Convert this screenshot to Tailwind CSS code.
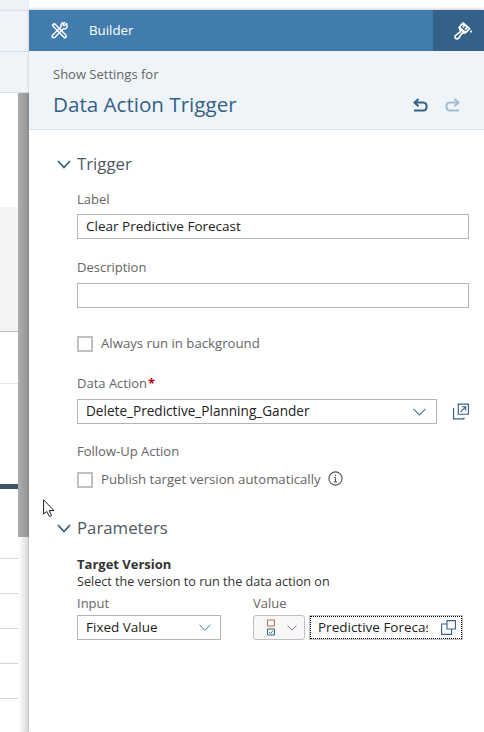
<!DOCTYPE html>
<html lang="en">
<head>
    <meta charset="UTF-8">
    <title>Builder</title>
    <script src="https://cdn.jsdelivr.net/npm/@tailwindcss/browser@4"></script>
</head>
<body class="relative w-[484px] h-[732px] overflow-hidden bg-white font-['Open_Sans','Noto_Sans',sans-serif] flex">

    <!-- page behind the panel -->
    <div class="w-[29px] h-full shrink-0 flex flex-col">
        <div class="h-[10px] bg-[#eef1f5]"></div>
        <div class="h-[42px] bg-[#f0f4f9] border-t border-[#d5e3f0] border-b"></div>
        <div class="h-[41px] bg-[#eff4f9] border-b border-[#cfe0f0]"></div>
        <div class="flex-1 flex">
            <div class="w-[18px] flex flex-col">
                <div class="h-[114px]"></div>
                <div class="h-[125px] bg-[#f4f4f4] border-b border-[#bbbbbb]"></div>
                <div class="h-[52px] border-b border-[#e5e5e5]"></div>
                <div class="h-[100px]"></div>
                <div class="h-[5px] bg-[#3e5368]"></div>
                <div class="h-[70px] border-b border-[#d5d5d5]"></div>
                <div class="h-[35px] border-b border-[#d5d5d5]"></div>
                <div class="h-[35px] border-b border-[#d5d5d5]"></div>
                <div class="h-[35px] border-b border-[#d5d5d5]"></div>
                <div class="h-[35px] border-b border-[#d5d5d5]"></div>
            </div>
            <div class="w-[11px] flex flex-col">
                <div class="h-[444px] bg-gradient-to-r from-[#adadad] to-[#949494]"></div>
                <div class="flex-1 bg-gradient-to-r from-white to-[#d9d9d9]"></div>
            </div>
        </div>
    </div>

    <!-- builder panel -->
    <div class="flex-1 mt-[10px] flex flex-col shadow-[0_-1px_3px_rgba(0,0,0,0.2)]">
        <div class="h-[41px] bg-[#427cac] flex items-center text-white shrink-0">
            <svg class="ml-[22px] w-[17px] h-[17px]" viewBox="0 0 18 18" fill="none" stroke="white" stroke-width="1.5" stroke-linejoin="round" stroke-linecap="round">
                <path d="M1.5 3.5 L3.5 1.5 L6 4 L16 14 Q16.8 15.5 15.5 16.4 Q14.2 17 13.4 15.9 L3.8 6 L1.5 3.5Z"/>
                <path d="M16.6 1.6 L14.4 3.8 L13 3.6 L12.8 2.2 L14.4 0.8 Q11.5 0.4 10.6 2.6 Q10.2 4 10.8 5 L1.6 14 Q0.8 15.4 1.8 16.4 Q3 17.2 4.2 16.2 L13 7.2 Q15 7.8 16.4 6.4 Q17.6 4.8 16.6 1.6Z"/>
            </svg>
            <span class="ml-[21px] text-[13.3px] font-medium">Builder</span>
            <div class="ml-auto w-[51px] h-full bg-[#346187] flex items-center justify-center">
                <svg class="ml-[8px] w-[18px] h-[18px]" viewBox="0 0 18 18" fill="none" stroke="white" stroke-width="1.7" stroke-linejoin="round">
                    <path d="M9 1 L15.6 6.6 L11.6 10.6 L5.2 5.2Z"/>
                    <path d="M5.4 6 L10.8 10.8 L8 11.2 L4.4 16.4 Q2.8 17.4 1.2 15.8 Q0.6 14.4 2 13.2 L6.6 9.6Z"/>
                    <path d="M11 2.8 L8.8 5.4 M13.4 4.8 L11.2 7.6"/>
                    <path d="M17 8.6 V10.6"/>
                </svg>
            </div>
        </div>

        <div class="h-[79px] bg-[#eff4f9] border-b border-[#d5e3f0] shrink-0 px-[24px] relative">
            <div class="mt-[14px] text-[13px] leading-[18px] text-[#666666]">Show Settings for</div>
            <div class="mt-[6px] text-[20.6px] leading-[30px] text-[#346187]">Data Action Trigger</div>
            <div class="absolute right-[24px] top-[47px] flex gap-[17px]">
                <svg class="w-[15px] h-[15px]" viewBox="0 0 15 15" fill="none" stroke="#346187" stroke-width="2">
                    <path d="M5.5 1 L1.5 4.6 L5.5 8.2"/>
                    <path d="M1.5 4.6 H10 Q13.6 4.8 13.6 8.4 Q13.6 12.5 10 12.6 H1"/>
                </svg>
                <svg class="w-[15px] h-[15px]" viewBox="0 0 15 15" fill="none" stroke="#a3bbd1" stroke-width="2">
                    <path d="M9.5 1 L13.5 4.6 L9.5 8.2"/>
                    <path d="M13.5 4.6 H5 Q1.4 4.8 1.4 8.4 Q1.4 12.5 5 12.6 H14"/>
                </svg>
            </div>
        </div>

        <div class="flex-1 pl-[28px] text-[13px] text-[#666666]">
            <div class="mt-[22px] flex items-center h-[24px]">
                <svg class="w-[14px] h-[9px]" viewBox="0 0 14 9" fill="none" stroke="#346187" stroke-width="1.8"><path d="M1 1 L7 7.5 L13 1"/></svg>
                <span class="ml-[6px] text-[16.8px] text-[#4f5963]">Trigger</span>
            </div>

            <div class="ml-[20px] w-[392px]">
                <div class="mt-[14px] leading-[18px]">Label</div>
                <div class="mt-[6px] h-[25px] border border-[#b5b5b5] px-[8px] flex items-center text-[13.5px] text-[#222222]">Clear Predictive Forecast</div>
                <div class="mt-[19px] leading-[18px]">Description</div>
                <div class="mt-[7px] h-[25px] border border-[#b5b5b5]"></div>

                <div class="mt-[27px] flex items-center h-[17px]">
                    <div class="w-[16px] h-[16px] border-2 border-[#bfbfbf]"></div>
                    <span class="ml-[8px] text-[13.2px]">Always run in background</span>
                </div>

                <div class="mt-[22px] leading-[18px]">Data Action<span class="text-[#b00] font-bold ml-[1px]">*</span></div>
                <div class="mt-[7px] flex items-center">
                    <div class="w-[360px] shrink-0 h-[25px] border border-[#b5b5b5] px-[8px] flex items-center justify-between text-[13.6px] text-[#222222]">
                        <span>Delete_Predictive_Planning_Gander</span>
                        <svg class="w-[13px] h-[8px] mr-[2px]" viewBox="0 0 13 8" fill="none" stroke="#427cac" stroke-width="1.1"><path d="M0.5 0.8 L6.5 7 L12.5 0.8"/></svg>
                    </div>
                    <svg class="ml-[16px] w-[17px] h-[17px]" viewBox="0 0 17 17" fill="none" stroke="#346187" stroke-width="1.2">
                        <path d="M5.6 0.6 H16.4 V11.4 H5.6Z"/>
                        <path d="M1 5 H0.6 V16.4 H11.6 V15"/>
                        <path d="M8 9 L13.5 3.5 M9.5 3.5 H13.5 V7.5"/>
                    </svg>
                </div>

                <div class="mt-[18px] leading-[18px]">Follow-Up Action</div>
                <div class="mt-[11px] flex items-center h-[17px]">
                    <div class="w-[16px] h-[16px] border-2 border-[#bfbfbf]"></div>
                    <span class="ml-[8px] text-[13.2px]">Publish target version automatically</span>
                    <svg class="ml-[7px] mb-[2px] w-[15px] h-[15px]" viewBox="0 0 15 15" fill="none" stroke="#555555" stroke-width="1.1">
                        <circle cx="7.5" cy="7.5" r="6.6"/>
                        <path d="M7.5 6.5 V11 M6 11 H9 M6.2 6.5 H7.5"/>
                        <path d="M7.5 3.6 V5"/>
                    </svg>
                </div>
            </div>

            <div class="mt-[28px] flex items-center h-[24px]">
                <svg class="w-[14px] h-[9px]" viewBox="0 0 14 9" fill="none" stroke="#346187" stroke-width="1.8"><path d="M1 1 L7 7.5 L13 1"/></svg>
                <span class="ml-[6px] text-[16.8px] text-[#4f5963]">Parameters</span>
            </div>

            <div class="ml-[20px]">
                <div class="mt-[16px] leading-[17px] font-bold text-[#333333]">Target Version</div>
                <div class="leading-[17px] text-[12.6px] text-[#333333]">Select the version to run the data action on</div>
                <div class="mt-[4px] flex">
                    <div class="w-[144px]">
                        <div class="leading-[18px]">Input</div>
                        <div class="mt-[3px] h-[25px] border border-[#b5b5b5] px-[8px] flex items-center justify-between text-[13.5px] text-[#222222]">
                            <span>Fixed Value</span>
                            <svg class="w-[12px] h-[7px] mr-[1px]" viewBox="0 0 12 7" fill="none" stroke="#427cac" stroke-width="1"><path d="M0.5 0.6 L6 6.4 L11.5 0.6"/></svg>
                        </div>
                    </div>
                    <div class="ml-[32px]">
                        <div class="leading-[18px]">Value</div>
                        <div class="mt-[3px] flex gap-[4px]">
                            <div class="w-[52px] h-[25px] border border-[#bfbfbf] rounded-[3px] bg-[#f7f7f7] flex items-center pl-[12px]">
                                <svg class="w-[10px] h-[17px]" viewBox="0 0 10 17" fill="none" stroke-width="1">
                                    <path d="M1.5 1 H8.5 V7 H1.5Z" stroke="#b0724e"/>
                                    <path d="M1.5 10 H8.5 V16 H1.5Z" stroke="#346187"/>
                                    <path d="M3 13 L4.6 14.6 L7 11.6" stroke="#666666"/>
                                </svg>
                                <svg class="ml-[11px] w-[10px] h-[6px]" viewBox="0 0 10 6" fill="none" stroke="#8a6f8f" stroke-width="1"><path d="M0.5 0.6 L5 5.2 L9.5 0.6"/></svg>
                            </div>
                            <div class="w-[154px] h-[25px] border border-[#bfbfbf] outline-1 outline-dotted outline-black -outline-offset-2 flex items-center pl-[8px] text-[13.5px] text-[#222222]">
                                <span class="w-[110px] overflow-hidden whitespace-nowrap">Predictive Forecast</span>
                                <svg class="ml-[13px] w-[15px] h-[15px]" viewBox="0 0 15 15" fill="none" stroke="#346187" stroke-width="1.1">
                                    <path d="M6 0.6 H14.4 V9 H6Z"/>
                                    <path d="M6 4 H0.6 V14.4 H10.6 V9"/>
                                </svg>
                            </div>
                        </div>
                    </div>
                </div>
            </div>
        </div>
    </div>

    <!-- mouse pointer -->
    <svg class="absolute left-[43px] top-[499px] w-[13px] h-[19px]" viewBox="0 0 13 19" fill="white" stroke="#222222" stroke-width="1">
        <path d="M0.6 0.8 V15 L3.8 12.4 L6.4 17.6 L8.6 16.6 L6.2 11.6 H11 Z"/>
    </svg>
</body>
</html>
